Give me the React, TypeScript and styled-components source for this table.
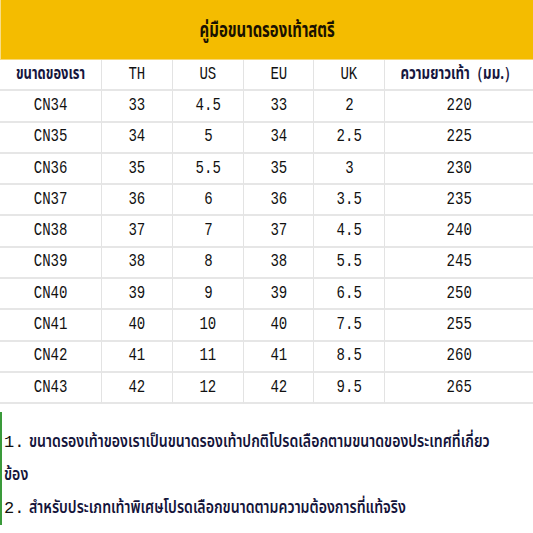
import React from 'react';
import styled, { createGlobalStyle } from 'styled-components';

const GlobalStyle = createGlobalStyle`
  html, body {
    margin: 0;
    padding: 0;
    background: #ffffff;
  }
  body {
    font-family: "Noto Sans", "DejaVu Sans", sans-serif;
    color: #111111;
  }
`;

const thai = `"Noto Sans Thai", "Noto Sans", "DejaVu Sans", sans-serif`;

const Page = styled.div`
  width: 533px;
  height: 533px;
  overflow: hidden;
  background: #ffffff;
`;

const TitleBar = styled.div`
  height: 59px;
  background: #f4bc00;
  border-left: 1px solid #f8dd88;
  border-bottom: 1px solid #f7d777;
  display: flex;
  align-items: center;
  justify-content: center;
`;

// Thai glyphs in the reference are tall and narrow, so squeeze them horizontally
const Condensed = styled.span<{ $size: number; $squeeze: number; $origin?: string; $weight?: number }>`
  display: inline-block;
  font-family: ${thai};
  font-size: ${({ $size }) => $size}px;
  font-weight: ${({ $weight }) => $weight || 700};
  transform: scaleX(${({ $squeeze }) => $squeeze});
  transform-origin: ${({ $origin }) => $origin || 'center'};
  white-space: nowrap;
`;

const Title = styled(Condensed)`
  color: #1a1200;
  margin-top: 2px;
`;

const SizeTable = styled.div`
  display: grid;
  grid-template-columns: 102px 71px 71px 70px 71px 1fr;
  grid-auto-rows: 31.3px;
`;

const Cell = styled.div<{ $last?: boolean }>`
  display: flex;
  align-items: center;
  justify-content: center;
  padding-bottom: 2px;
  border-right: ${({ $last }) => ($last ? 'none' : '1px solid #e3e3e3')};
  border-bottom: 2px solid #e6e6e6;
  overflow: hidden;
  white-space: nowrap;
`;

const Num = styled.span`
  display: inline-block;
  font-family: "Liberation Mono", "DejaVu Sans Mono", monospace;
  font-size: 18px;
  transform: scaleX(0.78);
  color: #111111;
`;

const ThaiHead = styled(Condensed)`
  color: #16163e;
`;

const Notes = styled.div`
  margin-top: 8px;
  border-left: 2px solid #3a9a3a;
  padding: 14px 0 0 2px;
  line-height: 33px;
  color: #111133;
`;

const NoteLine = styled.div`
  display: flex;
  align-items: baseline;
  white-space: nowrap;
`;

const Marker = styled.span`
  flex: none;
  width: 25px;
  font-family: "Liberation Mono", monospace;
  font-size: 17px;
  color: #111111;
`;

const NoteText = styled(Condensed)`
  color: #14143a;
`;

const headers = ['TH', 'US', 'EU', 'UK'];

const rows: string[][] = [
  ['CN34', '33', '4.5', '33', '2', '220'],
  ['CN35', '34', '5', '34', '2.5', '225'],
  ['CN36', '35', '5.5', '35', '3', '230'],
  ['CN37', '36', '6', '36', '3.5', '235'],
  ['CN38', '37', '7', '37', '4.5', '240'],
  ['CN39', '38', '8', '38', '5.5', '245'],
  ['CN40', '39', '9', '39', '6.5', '250'],
  ['CN41', '40', '10', '40', '7.5', '255'],
  ['CN42', '41', '11', '41', '8.5', '260'],
  ['CN43', '42', '12', '42', '9.5', '265'],
];

const App: React.FC = () => {
  return (
    <Page>
      <GlobalStyle />
      <TitleBar>
        <Title $size={21} $squeeze={0.71}>คู่มือขนาดรองเท้าสตรี</Title>
      </TitleBar>
      <SizeTable>
        <Cell>
          <ThaiHead $size={17} $squeeze={0.76}>ขนาดของเรา</ThaiHead>
        </Cell>
        {headers.map((h) => (
          <Cell key={h}>
            <Num>{h}</Num>
          </Cell>
        ))}
        <Cell $last>
          <ThaiHead $size={17} $squeeze={0.78}>ความยาวเท้า（มม.）</ThaiHead>
        </Cell>
        {rows.map((row) =>
          row.map((value, i) => (
            <Cell key={row[0] + i} $last={i === row.length - 1}>
              <Num>{value}</Num>
            </Cell>
          ))
        )}
      </SizeTable>
      <Notes>
        <NoteLine>
          <Marker>1.</Marker>
          <NoteText $size={17} $squeeze={0.83} $weight={600} $origin="left">
            ขนาดรองเท้าของเราเป็นขนาดรองเท้าปกติโปรดเลือกตามขนาดของประเทศที่เกี่ยว
          </NoteText>
        </NoteLine>
        <NoteLine>
          <NoteText $size={17} $squeeze={0.83} $weight={600} $origin="left">ข้อง</NoteText>
        </NoteLine>
        <NoteLine>
          <Marker>2.</Marker>
          <NoteText $size={17} $squeeze={0.83} $weight={600} $origin="left">
            สำหรับประเภทเท้าพิเศษโปรดเลือกขนาดตามความต้องการที่แท้จริง
          </NoteText>
        </NoteLine>
      </Notes>
    </Page>
  );
};

export default App;
